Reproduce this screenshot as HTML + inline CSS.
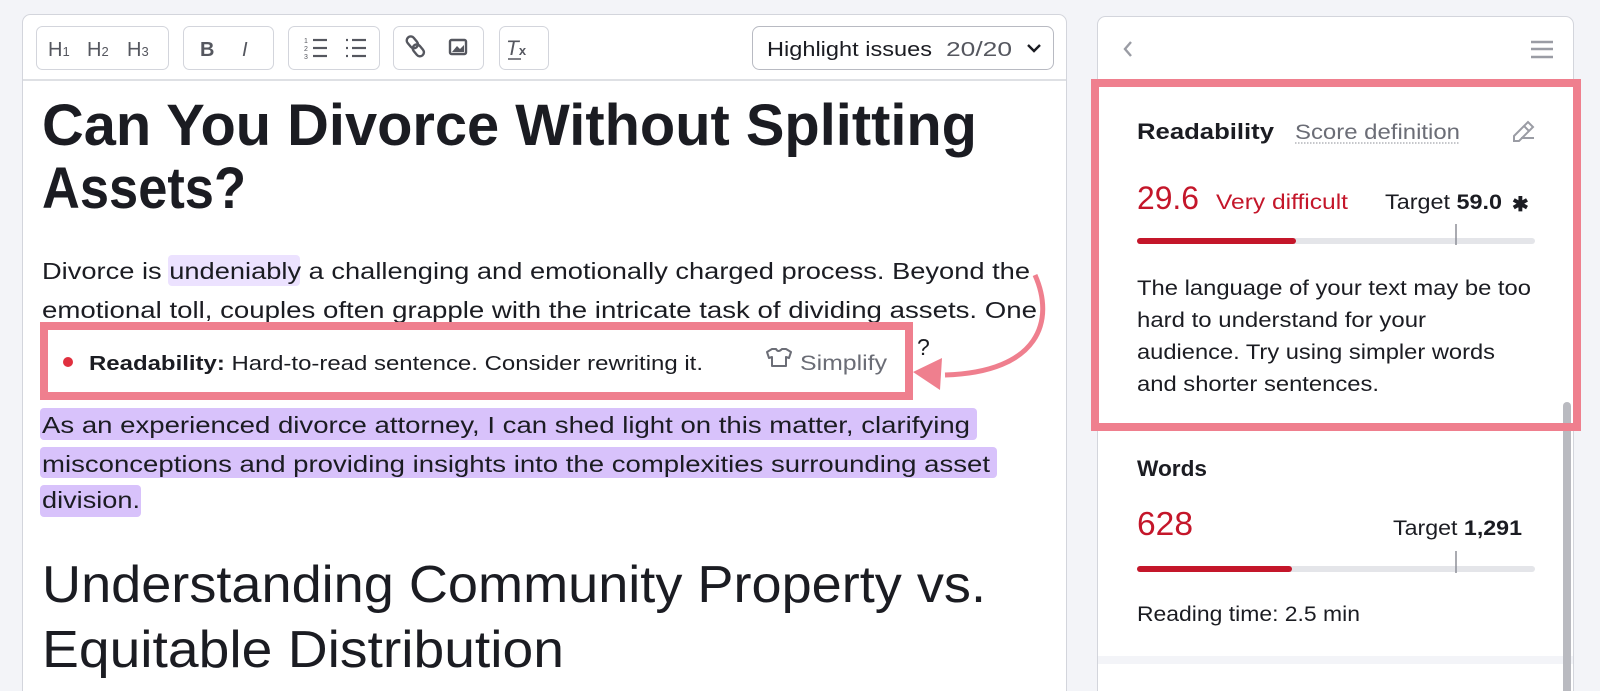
<!DOCTYPE html>
<html><head><meta charset="utf-8"><style>
html,body{margin:0;padding:0;background:#f3f4f8;}
svg{display:block}
text{font-family:"Liberation Sans",Arial,sans-serif;}
</style></head><body>
<svg width="1600" height="691" viewBox="0 0 1600 691" xmlns="http://www.w3.org/2000/svg">
<rect width="1600" height="691" fill="#f3f4f8"/>
<!-- left card -->
<rect x="22.5" y="14.5" width="1044" height="700" rx="8" fill="#fff" stroke="#d3d5dc"/>
<line x1="23" y1="80" x2="1066" y2="80" stroke="#d3d5dc" stroke-width="1.5"/>
<g fill="#fff" stroke="#d3d5dc">
<rect x="36.5" y="26.5" width="132" height="43" rx="6"/>
<rect x="183.5" y="26.5" width="90" height="43" rx="6"/>
<rect x="288.5" y="26.5" width="91" height="43" rx="6"/>
<rect x="393.5" y="26.5" width="90" height="43" rx="6"/>
<rect x="499.5" y="26.5" width="49" height="43" rx="6"/>
<rect x="752.5" y="26.5" width="301" height="43" rx="7" stroke="#b8bac2"/>
</g>
<g fill="#55575f" font-size="20">
<text x="48" y="56">H<tspan font-size="13">1</tspan></text>
<text x="87" y="56">H<tspan font-size="13">2</tspan></text>
<text x="127" y="56">H<tspan font-size="13">3</tspan></text>
<text x="200" y="56" font-weight="bold">B</text>
<text x="242" y="56" font-style="italic" font-family="Liberation Serif">I</text>
<text x="506" y="55" font-style="italic" font-family="Liberation Serif" font-size="21">T<tspan font-size="13" font-style="normal" font-family="Liberation Sans" font-weight="bold">x</tspan></text>
</g>
<line x1="508" y1="59" x2="521" y2="59" stroke="#55575f" stroke-width="1.5"/>
<g stroke="#55575f" stroke-width="2.2">
<line x1="313" y1="40" x2="327" y2="40"/><line x1="313" y1="48" x2="327" y2="48"/><line x1="313" y1="56" x2="327" y2="56"/>
<line x1="352" y1="40" x2="366" y2="40"/><line x1="352" y1="48" x2="366" y2="48"/><line x1="352" y1="56" x2="366" y2="56"/>
<line x1="346" y1="40" x2="348" y2="40"/><line x1="346" y1="48" x2="348" y2="48"/><line x1="346" y1="56" x2="348" y2="56"/>
</g>
<g fill="#55575f" font-size="7"><text x="304" y="43">1</text><text x="304" y="51">2</text><text x="304" y="59">3</text></g>
<g fill="none" stroke="#55575f" stroke-width="2.4">
<rect x="408" y="36" width="8" height="13" rx="4" transform="rotate(-40 412 42)"/>
<rect x="414" y="44" width="8" height="13" rx="4" transform="rotate(-40 418 50)"/>
<rect x="450" y="40" width="16" height="14" rx="1.5"/>
</g>
<path d="M452 52 L457 46 L460 49 L464 45 L464 52Z" fill="#55575f"/>
<text x="767" y="56" font-size="20" fill="#1b1c22" textLength="165" lengthAdjust="spacingAndGlyphs">Highlight issues</text>
<text x="946" y="56" font-size="20" fill="#55575f" textLength="66" lengthAdjust="spacingAndGlyphs">20/20</text>
<path d="M1028 45 l6 6 l6 -6" fill="none" stroke="#1b1c22" stroke-width="2.4"/>

<!-- content -->
<g fill="#1b1c22">
<text x="42" y="145" font-size="58" font-weight="bold" textLength="935" lengthAdjust="spacingAndGlyphs">Can You Divorce Without Splitting</text>
<text x="42" y="208" font-size="58" font-weight="bold" textLength="204" lengthAdjust="spacingAndGlyphs">Assets?</text>
</g>
<rect x="168" y="255" width="132" height="31" rx="4" fill="#ece2ff"/>
<g fill="#1b1c22" font-size="23">
<text x="42" y="279" textLength="988" lengthAdjust="spacingAndGlyphs">Divorce is undeniably a challenging and emotionally charged process. Beyond the</text>
<text x="42" y="318" textLength="995" lengthAdjust="spacingAndGlyphs">emotional toll, couples often grapple with the intricate task of dividing assets. One</text>
<text x="917" y="355">?</text>
</g>
<g fill="#d8c2fb">
<rect x="40" y="408" width="937" height="32" rx="4"/>
<rect x="40" y="447" width="957" height="31" rx="4"/>
<rect x="40" y="485" width="101" height="32" rx="4"/>
</g>
<g fill="#1b1c22" font-size="23">
<text x="42" y="433" textLength="928" lengthAdjust="spacingAndGlyphs">As an experienced divorce attorney, I can shed light on this matter, clarifying</text>
<text x="42" y="472" textLength="948" lengthAdjust="spacingAndGlyphs">misconceptions and providing insights into the complexities surrounding asset</text>
<text x="42" y="508" textLength="98" lengthAdjust="spacingAndGlyphs">division.</text>
</g>
<g fill="#1b1c22">
<text x="42" y="602" font-size="52" textLength="944" lengthAdjust="spacingAndGlyphs">Understanding Community Property vs.</text>
<text x="42" y="667" font-size="52" textLength="522" lengthAdjust="spacingAndGlyphs">Equitable Distribution</text>
</g>

<!-- popup -->
<rect x="44" y="326" width="865" height="70" fill="#fff" stroke="#ef7f8e" stroke-width="8"/>
<circle cx="68" cy="362" r="5" fill="#e0303f"/>
<text x="89" y="370" font-size="20" fill="#1b1c22" textLength="614" lengthAdjust="spacingAndGlyphs"><tspan font-weight="bold">Readability:</tspan> Hard-to-read sentence. Consider rewriting it.</text>
<path d="M767 352 l5 -3 h4 q2 4 6 0 h4 l5 3 -2 6 -3 -1 v9 h-14 v-9 l-3 1z" fill="none" stroke="#6b6d76" stroke-width="2" stroke-linejoin="round"/>
<text x="800" y="370" font-size="21" fill="#6b6d76" textLength="87" lengthAdjust="spacingAndGlyphs">Simplify</text>
<!-- arrow -->
<path d="M1035 275 C1055 320 1040 372 945 375" fill="none" stroke="#ef7f8e" stroke-width="5"/>
<path d="M913 372 L942 358 L940 390Z" fill="#ef7f8e"/>

<!-- right card -->
<rect x="1097.5" y="16.5" width="476" height="700" rx="8" fill="#fff" stroke="#d3d5dc"/>
<path d="M1131 42 l-6 7 l6 7" fill="none" stroke="#9a9ca4" stroke-width="2.4"/>
<g stroke="#9a9ca4" stroke-width="2.4"><line x1="1531" y1="42" x2="1553" y2="42"/><line x1="1531" y1="49" x2="1553" y2="49"/><line x1="1531" y1="57" x2="1553" y2="57"/></g>
<rect x="1098" y="656" width="475" height="8" fill="#f3f4f8"/>
<rect x="1563" y="402" width="8" height="300" rx="4" fill="#b9bac0"/>
<rect x="1095" y="83" width="482" height="344" fill="none" stroke="#ef7f8e" stroke-width="8"/>
<text x="1137" y="139" font-size="22" font-weight="bold" fill="#1b1c22" textLength="137" lengthAdjust="spacingAndGlyphs">Readability</text>
<text x="1295" y="139" font-size="21" fill="#6b6d76" textLength="165" lengthAdjust="spacingAndGlyphs">Score definition</text>
<line x1="1295" y1="143" x2="1460" y2="143" stroke="#8d8f97" stroke-dasharray="1.5 1.5"/>
<path d="M1514 136 l14 -14 l5 5 l-14 14 h-5z M1524 126 l5 5 M1521 138 h13" fill="none" stroke="#9a9ca4" stroke-width="2"/>
<text x="1137" y="209" font-size="32" fill="#c4162a" textLength="62" lengthAdjust="spacingAndGlyphs">29.6</text>
<text x="1216" y="209" font-size="21" fill="#c4162a" textLength="132" lengthAdjust="spacingAndGlyphs">Very difficult</text>
<text x="1385" y="209" font-size="21" fill="#1b1c22" textLength="117" lengthAdjust="spacingAndGlyphs">Target <tspan font-weight="bold">59.0</tspan></text>
<text x="1512" y="211" font-size="20" font-weight="bold" fill="#1b1c22">✱</text>
<rect x="1137" y="238" width="398" height="6" rx="3" fill="#e4e5e9"/>
<rect x="1137" y="238" width="159" height="6" rx="3" fill="#c4162a"/>
<line x1="1456" y1="224" x2="1456" y2="245" stroke="#8d8f97" stroke-width="1.5"/>
<g font-size="21" fill="#1b1c22">
<text x="1137" y="295" textLength="394" lengthAdjust="spacingAndGlyphs">The language of your text may be too</text>
<text x="1137" y="327" textLength="289" lengthAdjust="spacingAndGlyphs">hard to understand for your</text>
<text x="1137" y="359" textLength="358" lengthAdjust="spacingAndGlyphs">audience. Try using simpler words</text>
<text x="1137" y="391" textLength="242" lengthAdjust="spacingAndGlyphs">and shorter sentences.</text>
</g>
<text x="1137" y="476" font-size="22" font-weight="bold" fill="#1b1c22" textLength="70" lengthAdjust="spacingAndGlyphs">Words</text>
<text x="1137" y="535" font-size="33" fill="#c4162a" textLength="56" lengthAdjust="spacingAndGlyphs">628</text>
<text x="1393" y="535" font-size="21" fill="#1b1c22" textLength="129" lengthAdjust="spacingAndGlyphs">Target <tspan font-weight="bold">1,291</tspan></text>
<rect x="1137" y="566" width="398" height="6" rx="3" fill="#e4e5e9"/>
<rect x="1137" y="566" width="155" height="6" rx="3" fill="#c4162a"/>
<line x1="1456" y1="551" x2="1456" y2="573" stroke="#8d8f97" stroke-width="1.5"/>
<text x="1137" y="621" font-size="21" fill="#1b1c22" textLength="223" lengthAdjust="spacingAndGlyphs">Reading time: 2.5 min</text>
</svg>
</body></html>
